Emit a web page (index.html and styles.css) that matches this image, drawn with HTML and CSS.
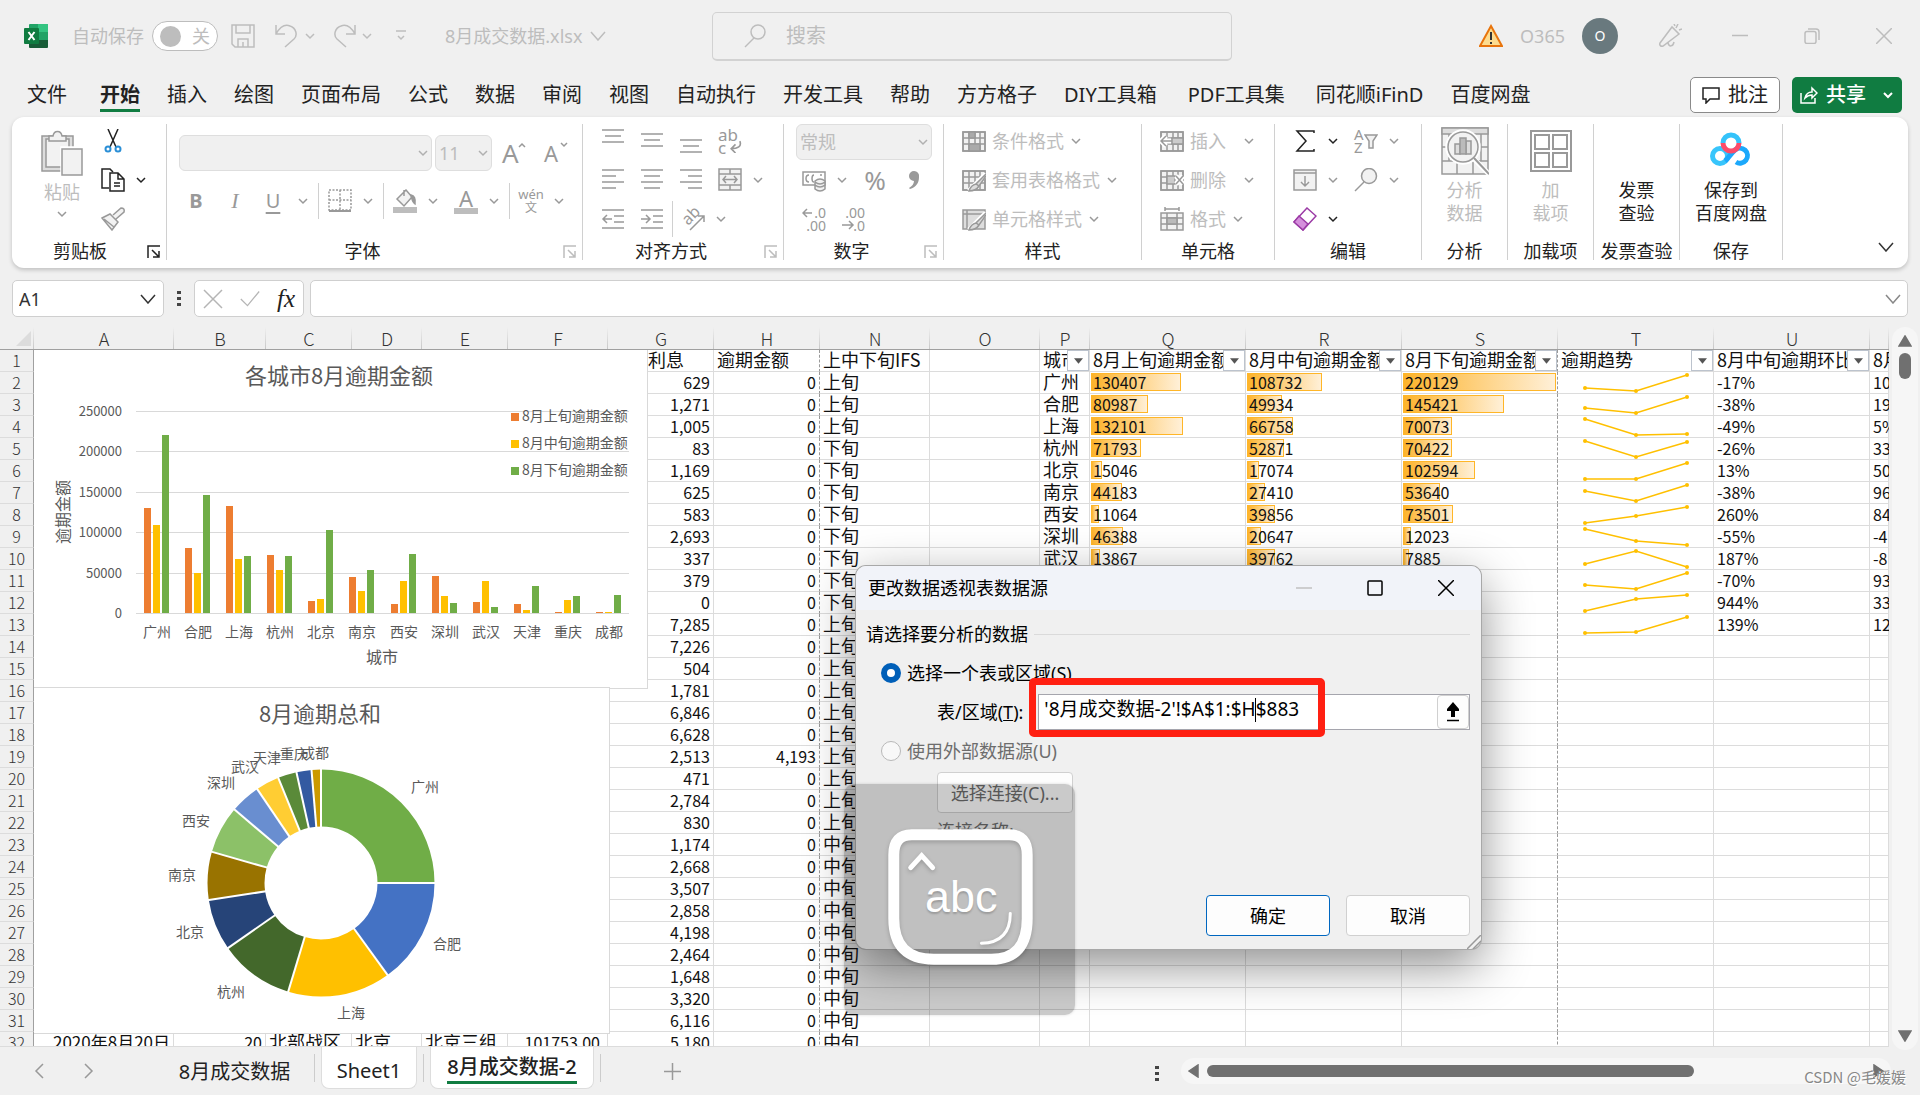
FILE: index.html
```
<!DOCTYPE html>
<html lang="zh-CN">
<head>
<meta charset="utf-8">
<title>8月成交数据.xlsx - Excel</title>
<link rel="stylesheet" href="styles.css">
</head>
<body>
<svg class="defs" aria-hidden="true">
  <symbol id="chev" viewBox="0 0 12 12"><path d="M2 4l4 4 4-4"/></symbol>
  <symbol id="launch" viewBox="0 0 14 14"><path d="M1 13V1h12M5 5l7 7M12 6v6H6"/></symbol>
  <symbol id="grid" viewBox="0 0 24 24"><path class="soft" d="M1 3h22v19H1z"/><path d="M1 3h22v19H1zM1 9h22M1 15h22M7 3v19M13 3v19M18 3v19"/></symbol>
</svg>

<header class="titlebar">
  <div class="title-left">
    <svg class="logo" viewBox="0 0 24 24"><path fill="#21a366" d="M6 0h17a1 1 0 0 1 1 1v7H5V1a1 1 0 0 1 1-1z"/><path fill="#33c481" d="M14 0h9a1 1 0 0 1 1 1v7H14z"/><path fill="#107c41" d="M5 8h10v8H5z"/><path fill="#21a366" d="M14 8h10v8H14z"/><path fill="#185c37" d="M5 16h19v7a1 1 0 0 1-1 1H6a1 1 0 0 1-1-1z"/><rect y="4" width="15" height="16" rx="1" fill="#107c41"/><path stroke="#fff" stroke-width="2" fill="none" d="M4.500 8l6 8M10.500 8l-6 8"/></svg>
    <span>自动保存</span>
    <button class="toggle" role="switch" aria-checked="false"><i></i>关</button>
    <button class="ic save" aria-label="保存"><svg viewBox="0 0 24 24"><path d="M1 1h22v22H4l-3-3zM5 1v8h14V1M7 23v-8h10v8M12 18v5"/></svg></button>
    <div class="split"><button class="ic" aria-label="撤消"><svg viewBox="0 0 24 24"><path d="M1 1v9h9M1 10C5 3 10 0 15 2c6 2 8 9 4 13l-9 8"/></svg></button><button class="cv" aria-label="撤消选项"><svg><use href="#chev"/></svg></button></div>
    <div class="split"><button class="ic" aria-label="恢复"><svg viewBox="0 0 24 24"><path d="M23 1v9h-9M23 10C19 3 14 0 9 2 3 4 1 11 5 15l9 8"/></svg></button><button class="cv" aria-label="恢复选项"><svg><use href="#chev"/></svg></button></div>
    <button class="cv qat" aria-label="自定义快速访问工具栏"><svg viewBox="0 0 12 12"><path d="M1 1h10M3 6l3 3 3-3"/></svg></button>
    <button class="filename">8月成交数据.xlsx<svg viewBox="0 0 16 10"><path d="M1 1l7 8 7-8"/></svg></button>
  </div>
  <label class="search"><svg viewBox="0 0 22 24"><circle cx="14" cy="8" r="7"/><path d="M10 14L1 23"/></svg><input type="search" placeholder="搜索" aria-label="搜索"></label>
  <div class="title-right">
    <svg class="warn" viewBox="0 0 24 24"><path fill="#fddc8f" stroke="#e8740c" stroke-width="2" d="M12 2l11 20H1z"/><path stroke="#333" stroke-width="2" d="M12 8v8M12 18v2"/></svg>
    <span class="user">O365</span><span class="avatar">O</span>
    <button class="ic mega" aria-label="即将推出"><svg viewBox="0 0 24 24"><path d="M2 19L14 3l7 7L5 22c-2 1-4-1-3-3zM10 19c1 4 5 4 6-1M18 4l2-4M21 6l3-1M17 2l-1-2"/></svg></button>
    <button class="win" aria-label="最小化"><svg viewBox="0 0 16 16"><path d="M0 7.500h16"/></svg></button>
    <button class="win" aria-label="还原"><svg viewBox="0 0 16 16"><rect x="1" y="3.500" width="11" height="12" rx="2"/><path d="M4 1h8q3 0 3 3v8"/></svg></button>
    <button class="win" aria-label="关闭"><svg viewBox="0 0 16 16"><path d="M0 0l16 16M16 0L0 16"/></svg></button>
  </div>
</header>

<nav class="tabs">
  <a class="file" href="#">文件</a><a class="on" href="#">开始</a><a href="#">插入</a><a href="#">绘图</a><a href="#">页面布局</a><a href="#">公式</a><a href="#">数据</a><a href="#">审阅</a><a href="#">视图</a><a href="#">自动执行</a><a href="#">开发工具</a><a href="#">帮助</a><a href="#">方方格子</a><a class="mixed" href="#">DIY工具箱</a><a class="mixed" href="#">PDF工具集</a><a href="#">同花顺iFinD</a><a href="#">百度网盘</a>
  <button class="comment"><svg viewBox="0 0 18 18"><path d="M1 2h16v11H8l-4 4v-4H1z"/></svg>批注</button>
  <button class="share"><svg viewBox="0 0 18 18"><path d="M1 7v10h14v-5M5 12c1-4 4-6 7-6V2l5 5-5 5V9c-3 0-5 1-7 3z"/></svg>共享<svg class="sc"><use href="#chev"/></svg></button>
</nav>

<section class="ribbon">
  <div class="group g-clip">
    <div class="tools">
      <button class="paste"><svg viewBox="0 0 42 46"><path class="soft2" d="M1 6h31v35H1z"/><path class="soft" d="M5 9h23v28H5z"/><path class="soft" d="M8 11V6h4c1-6 8-6 9 0h4v5z"/><path class="white" d="M20 17h22v28H20z"/><path class="soft" d="M21 19h20v26H21z"/></svg>粘贴<svg class="c"><use href="#chev"/></svg></button>
      <div class="rows">
        <button class="ic dark" aria-label="剪切"><svg viewBox="0 0 24 24"><path d="M7 0l8 18M17 0L9 18"/><g stroke="#2b8fd6" stroke-width="2"><circle cx="7" cy="20" r="2.500"/><circle cx="17" cy="20" r="2.500"/></g></svg></button>
        <div class="split dark"><button class="ic" aria-label="复制"><svg viewBox="0 0 24 24"><path d="M8 20H1V1h8l3 3"/><path d="M9 5h8l6 6v12H9zM17 5v6h6M13 15h6M13 18h6"/></svg></button><button class="cv" aria-label="复制选项"><svg><use href="#chev"/></svg></button></div>
        <button class="ic" aria-label="格式刷"><svg viewBox="0 0 24 24"><path class="soft" d="M1 11l8-4 8 8-6 8zM12 8l8-7q4 0 3 4l-8 7M3 12l10 8"/></svg></button>
      </div>
    </div>
    <div class="cap">剪贴板<button class="la dark" aria-label="剪贴板设置"><svg><use href="#launch"/></svg></button></div>
  </div>

  <div class="group g-font">
    <div class="tools">
      <div class="row combos">
        <select class="combo font-name" aria-label="字体" disabled><option></option></select>
        <select class="combo font-size" aria-label="字号" disabled><option>11</option></select>
        <button class="ic letter big" aria-label="增大字号">A<svg class="sup"><path d="M1 5l3-3 3 3"/></svg></button>
        <button class="ic letter" aria-label="减小字号">A<svg class="sup"><path d="M1 1l3 3 3-3"/></svg></button>
      </div>
      <div class="row fmt">
        <button class="tx b">B</button><button class="tx i">I</button>
        <div class="split"><button class="tx u">U</button><button class="cv" aria-label="下划线选项"><svg><use href="#chev"/></svg></button></div>
        <span class="sep"></span>
        <div class="split"><button class="ic" aria-label="边框"><svg viewBox="0 0 24 24"><path stroke-dasharray="2 1.500" d="M1 1h22v20H1zM12 1v20M1 11h22"/><path d="M1 22h22" stroke-width="2"/></svg></button><button class="cv" aria-label="边框选项"><svg><use href="#chev"/></svg></button></div>
        <span class="sep"></span>
        <div class="split"><button class="ic" aria-label="填充颜色"><svg viewBox="0 0 24 24"><path class="soft" d="M4 10l9-9 6 7-8 9zM11 1v6"/><path fill="#999" d="M18 6q5 1 4 9-3-2-4-9z"/><path stroke="#bdbdbd" stroke-width="6" d="M0 21h24"/></svg></button><button class="cv" aria-label="填充选项"><svg><use href="#chev"/></svg></button></div>
        <div class="split far"><button class="ic fc" aria-label="字体颜色">A</button><button class="cv" aria-label="字体颜色选项"><svg><use href="#chev"/></svg></button></div>
        <span class="sep"></span>
        <div class="split"><button class="ic wen"><span>wén</span><span>文</span></button><button class="cv" aria-label="拼音选项"><svg><use href="#chev"/></svg></button></div>
      </div>
    </div>
    <div class="cap">字体<button class="la" aria-label="字体设置"><svg><use href="#launch"/></svg></button></div>
  </div>

  <div class="group g-align">
    <div class="tools"><div class="rows">
      <div class="row">
        <button class="ic" aria-label="顶端对齐"><svg viewBox="0 0 24 24"><path d="M1 1h22M4 7h16M1 13h22"/></svg></button>
        <button class="ic" aria-label="垂直居中"><svg viewBox="0 0 24 24"><path d="M1 5h22M4 11h16M1 17h22"/></svg></button>
        <button class="ic" aria-label="底端对齐"><svg viewBox="0 0 24 24"><path d="M1 11h22M4 17h16M1 23h22"/></svg></button>
        <button class="ic wrap"><span>ab</span><span>c</span><svg viewBox="0 0 12 12"><path d="M10 1c2 5-2 7-8 7M6 4L2 8l4 4"/></svg></button>
      </div>
      <div class="row">
        <button class="ic" aria-label="左对齐"><svg viewBox="0 0 24 24"><path d="M1 2h22M1 8h14M1 14h22M1 20h14"/></svg></button>
        <button class="ic" aria-label="居中"><svg viewBox="0 0 24 24"><path d="M1 2h22M4 8h16M1 14h22M4 20h16"/></svg></button>
        <button class="ic" aria-label="右对齐"><svg viewBox="0 0 24 24"><path d="M1 2h22M9 8h14M1 14h22M9 20h14"/></svg></button>
        <div class="split"><button class="ic" aria-label="合并后居中"><svg viewBox="0 0 24 24"><path class="soft" d="M1 1h22v21H1z"/><path d="M1 6h22M1 17h22M12 1v5M12 17v5M5 11.500h14M8 8l-3 3.500L8 15M16 8l3 3.500-3 3.500"/></svg></button><button class="cv" aria-label="合并选项"><svg><use href="#chev"/></svg></button></div>
      </div>
      <div class="row">
        <button class="ic" aria-label="减少缩进"><svg viewBox="0 0 24 24"><path d="M1 3h22M13 9h10M13 15h10M1 21h22M2 12h9M6 8l-4 4 4 4"/></svg></button>
        <div class="row tight"><button class="ic" aria-label="增加缩进"><svg viewBox="0 0 24 24"><path d="M1 3h22M13 9h10M13 15h10M1 21h22M1 12h9M6 8l4 4-4 4"/></svg></button>
        <span class="sep"></span>
        <div class="split"><button class="ic slant"><span>ab</span><svg viewBox="0 0 24 24"><path d="M9 23L23 9M17 9h6v6"/></svg></button><button class="cv" aria-label="方向选项"><svg><use href="#chev"/></svg></button></div></div>
      </div>
    </div></div>
    <div class="cap">对齐方式<button class="la" aria-label="对齐设置"><svg><use href="#launch"/></svg></button></div>
  </div>

  <div class="group g-num">
    <div class="tools"><div class="rows">
      <select class="combo num" aria-label="数字格式" disabled><option>常规</option></select>
      <div class="row in">
        <div class="split"><button class="ic" aria-label="会计数字格式"><svg viewBox="0 0 24 24"><path d="M1 4h22v13H1zM7 7q-3 0-3 3.500T7 14M12 7q-2 0-2 3.500T12 14M18 7h2"/><path class="soft" d="M13 13v8q5 4 10 0v-8q-5-4-10 0zM13 14q5 4 10 0M13 17q5 4 10 0"/></svg></button><button class="cv" aria-label="货币选项"><svg><use href="#chev"/></svg></button></div>
        <button class="ic pct">%</button>
        <button class="ic" aria-label="千位分隔"><svg viewBox="0 0 24 24"><path fill="#999" stroke="none" d="M12 3a5 5 0 0 1 5 6c0 6-3 10-9 12l-1-1c3-2 5-4 5-7A5 5 0 0 1 12 3z"/></svg></button>
      </div>
      <div class="row in">
        <button class="ic dec"><span>.0</span><span>.00</span><svg viewBox="0 0 24 24"><path d="M1 6h9M5 2L1 6l4 4"/></svg></button>
        <button class="ic dec"><span>.00</span><span>.0</span><svg viewBox="0 0 24 24"><path d="M1 18h11M8 14l4 4-4 4"/></svg></button>
      </div>
    </div></div>
    <div class="cap">数字<button class="la" aria-label="数字设置"><svg><use href="#launch"/></svg></button></div>
  </div>

  <div class="group g-style">
    <div class="tools"><div class="rows">
      <button class="lb"><svg viewBox="0 0 24 24"><use href="#grid"/><path fill="#aaa" d="M7 3h6v6H7zM7 15h11v7H7z"/></svg>条件格式<svg class="c"><use href="#chev"/></svg></button>
      <button class="lb"><svg viewBox="0 0 24 24"><use href="#grid"/><path class="halo" d="M24 6L13 17l-6 6"/><path class="soft2" d="M24 6L14 16l3 2 7-10M14 16q-5 1-7 7 7 0 10-5z"/></svg>套用表格格式<svg class="c"><use href="#chev"/></svg></button>
      <button class="lb"><svg viewBox="0 0 24 24"><path class="soft2" d="M1 3h22v19H1zM5 3v19M1 7h22"/><path class="halo" d="M24 6L13 17l-6 6"/><path class="soft2" d="M24 6L14 16l3 2 7-10M14 16q-5 1-7 7 7 0 10-5z"/></svg>单元格样式<svg class="c"><use href="#chev"/></svg></button>
    </div></div>
    <div class="cap">样式</div>
  </div>

  <div class="group g-cell">
    <div class="tools"><div class="rows">
      <button class="lb"><svg viewBox="0 0 24 24"><use href="#grid"/><path fill="#ccc" d="M12 9h11v6H12z"/><path class="halo" d="M0 12h11M6 7l-5 5 5 5"/><path d="M1 12h11M6 7l-5 5 5 5"/></svg><span>插入</span><svg class="c"><use href="#chev"/></svg></button>
      <button class="lb"><svg viewBox="0 0 24 24"><use href="#grid"/><path fill="#ccc" d="M7 8h8v8H7z"/><path class="halo" d="M16 8l7 8M23 8l-7 8"/><path d="M16 8l7 8M23 8l-7 8"/></svg><span>删除</span><svg class="c"><use href="#chev"/></svg></button>
      <button class="lb"><svg viewBox="0 0 24 24"><path class="soft" d="M1 6h22v17H1z"/><path d="M1 11h22M1 17h22M7 6v17M17 6v17M5 2h14M5 0v4M19 0v4"/><path fill="#bbb" d="M7 11h10v6H7z"/></svg>格式<svg class="c"><use href="#chev"/></svg></button>
    </div></div>
    <div class="cap">单元格</div>
  </div>

  <div class="group g-edit">
    <div class="tools"><div class="rows">
      <div class="row">
        <div class="split dark"><button class="ic" aria-label="自动求和"><svg viewBox="0 0 24 24"><path d="M21 4V2H4l9 10-9 10h17v-2"/></svg></button><button class="cv" aria-label="求和选项"><svg><use href="#chev"/></svg></button></div>
        <div class="split"><button class="ic az"><span>A</span><span>Z</span><svg viewBox="0 0 14 16"><path class="soft" d="M1 1h12L9 7v7H5V7z"/></svg></button><button class="cv" aria-label="排序选项"><svg><use href="#chev"/></svg></button></div>
      </div>
      <div class="row">
        <div class="split"><button class="ic" aria-label="填充"><svg viewBox="0 0 24 24"><path class="soft" d="M1 2h22v20H1zM1 5h22M12 8v10M8 14l4 4 4-4"/></svg></button><button class="cv" aria-label="填充选项"><svg><use href="#chev"/></svg></button></div>
        <div class="split"><button class="ic" aria-label="查找和选择"><svg viewBox="0 0 24 24"><circle class="soft" cx="15" cy="8" r="7.500"/><path d="M10 14L1 23"/></svg></button><button class="cv" aria-label="查找选项"><svg><use href="#chev"/></svg></button></div>
      </div>
      <div class="split dark"><button class="ic" aria-label="清除"><svg viewBox="0 0 24 24" class="purple"><path fill="#fff" d="M14 1l9 8L10 23l-9-8z"/><path fill="#d58fdc" d="M6 9l9 8-5 6-9-8z"/></svg></button><button class="cv" aria-label="清除选项"><svg><use href="#chev"/></svg></button></div>
    </div></div>
    <div class="cap">编辑</div>
  </div>

  <div class="group g-big">
    <button class="bigbtn"><svg viewBox="0 0 48 48"><path class="soft" d="M1 1h46v46H1z"/><path class="soft2" d="M1 1h46v6H1z"/><path d="M1 20h46M1 34h46M16 34v13M32 34v13M8 7v27M40 7v27"/><circle class="white" cx="22" cy="20" r="17"/><path class="halo" d="M33 32l15 15"/><circle class="soft" cx="22" cy="20" r="15"/><path class="soft2" d="M14 17h5v10h-5zM25 14h5v13h-5z"/><path fill="#bbb" d="M19 11h6v16h-6z"/><path stroke-width="2" d="M33 31l15 16"/></svg><span>分析<br>数据</span></button>
    <div class="cap">分析</div>
  </div>
  <div class="group g-big">
    <button class="bigbtn"><svg viewBox="0 0 48 48"><path stroke-width="2" d="M4 4h40v40H4zM8 8h14v14H8zM26 8h14v14H26zM8 26h14v14H8zM26 26h14v14H26z"/></svg><span>加<br>载项</span></button>
    <div class="cap">加载项</div>
  </div>
  <div class="group g-big">
    <button class="bigbtn dark"><svg viewBox="0 0 48 48"></svg><span>发票<br>查验</span></button>
    <div class="cap">发票查验</div>
  </div>
  <div class="group g-save">
    <button class="bigbtn dark"><svg viewBox="0 0 48 48" class="pan"><path stroke="#35c3fa" d="M16 16a8 8 0 0 1 16 0"/><circle cx="13" cy="29" r="7.500" stroke="#38c5fb"/><path stroke="#1ba8fb" d="M18 34c4-3 6-8 10-11a7.500 7.500 0 1 1 1 12"/><path stroke="#fb4c6a" d="M16 16a8 8 0 0 0 16 0"/></svg><span>保存到<br>百度网盘</span></button>
    <div class="cap">保存</div>
  </div>
  <button class="fold" aria-label="折叠功能区"><svg viewBox="0 0 16 10"><path d="M1 1l7 8 7-8"/></svg></button>
</section>

<section class="formula">
  <div class="box namebox"><input value="A1" aria-label="名称框"><svg viewBox="0 0 16 10"><path d="M1 1l7 8 7-8"/></svg></div>
  <svg class="dots" viewBox="0 0 4 16"><path d="M0 0h4v3H0zM0 6h4v3H0zM0 12h4v3H0z"/></svg>
  <div class="box fxbox"><button aria-label="取消"><svg viewBox="0 0 20 20"><path d="M1 1l18 18M19 1L1 19"/></svg></button><button aria-label="输入"><svg viewBox="0 0 24 20"><path d="M1 10l8 8L23 1"/></svg></button><button class="fx">fx</button></div>
  <div class="box fbar"><input aria-label="编辑栏"><svg viewBox="0 0 16 10"><path d="M1 1l7 8 7-8"/></svg></div>
</section>

<main class="sheet">
  <div class="cells">
    <table id="grid-table"></table>
    <svg class="chart chart-bar" id="chart-bar" viewBox="0 0 613 338"></svg>
    <svg class="chart chart-ring" id="chart-ring" viewBox="0 0 575 345"></svg>
  </div>
  <div class="vscroll"><svg viewBox="0 0 14 12"><path d="M7 1l6 10H1z"/></svg><i></i><svg class="down" viewBox="0 0 14 12"><path d="M7 11L1 1h12z"/></svg></div>
</main>

<footer class="bottom">
  <button class="nav" aria-label="上一个"><svg viewBox="0 0 10 16"><path d="M9 1L2 8l7 7"/></svg></button>
  <button class="nav" aria-label="下一个"><svg viewBox="0 0 10 16"><path d="M1 1l7 7-7 7"/></svg></button>
  <div class="sheets">
    <button class="st first">8月成交数据</button><i></i><button class="st open">Sheet1</button><i></i><button class="st open cur"><span>8月成交数据-2</span></button><i></i>
  </div>
  <button class="plus" aria-label="新工作表"><svg viewBox="0 0 17 17"><path d="M8.500 0v17M0 8.500h17"/></svg></button>
  <svg class="dots hd" viewBox="0 0 4 16"><path d="M0 0h4v3H0zM0 6h4v3H0zM0 12h4v3H0z"/></svg>
  <div class="hscroll"><svg viewBox="0 0 11 14"><path d="M1 7l9-6v12z"/></svg><i></i><svg class="right" viewBox="0 0 11 14"><path d="M10 7L1 1v12z"/></svg></div>
</footer>

<form class="dialog" role="dialog" aria-labelledby="dlg-title">
  <div class="dlg-head"><h1 id="dlg-title">更改数据透视表数据源</h1>
    <button type="button" disabled aria-label="最小化"><svg viewBox="0 0 16 16"><path d="M0 8h16"/></svg></button>
    <button type="button" aria-label="最大化"><svg viewBox="0 0 16 16"><rect x="1" y="1" width="14" height="14" rx="1"/></svg></button>
    <button type="button" aria-label="关闭"><svg viewBox="0 0 16 16"><path d="M0 0l16 16M16 0L0 16"/></svg></button>
  </div>
  <div class="dlg-body">
    <div class="legend">请选择要分析的数据</div>
    <label class="opt"><input type="radio" name="src" checked>选择一个表或区域(S)</label>
    <div class="field"><label for="range">表/区域(<u>T</u>):</label><div class="range"><input id="range" value="'8月成交数据-2'!$A$1:$H$883"><i class="caret"></i><button type="button" aria-label="折叠对话框"><svg viewBox="0 0 16 20"><path fill="#000" stroke="none" d="M8 0l6 7v2h-4v6H6V9H2V7z"/><path d="M2 18.500h12"/></svg></button></div></div>
    <label class="opt off"><input type="radio" name="src" disabled>使用外部数据源(U)</label>
    <button type="button" class="btn conn" disabled>选择连接(C)...</button>
    <div class="conn-name">连接名称:</div>
    <div class="actions"><button type="button" class="btn ok">确定</button><button type="button" class="btn">取消</button></div>
  </div>
  <svg class="grip" viewBox="0 0 14 14"><path d="M0 14L14 0M6 14l8-8"/></svg>
</form>
<div class="mark"></div>
<div class="ime"><svg viewBox="0 0 232 232"><path stroke="#fff" stroke-width="11" d="M68 51h98q18 0 18 20v64q0 41-36 41H90q-40 0-40-41V71q0-20 18-20z"/><path stroke="#fff" stroke-width="5" stroke-linecap="round" d="M67 84l11-12 11 12"/><path stroke="#fff" stroke-width="3" stroke-linecap="round" d="M167 130q0 29-29 30"/></svg><span>abc</span></div>
<div class="watermark">CSDN @毛媛媛</div>
<script src="app.js"></script>
</body>
</html>
```
FILE: app.js
```
const cities = [
  ['广州', 130407, 108732, 220129, '-17%', '10', '#70ad47', 391, 99],
  ['合肥', 80987, 49934, 145421, '-38%', '19', '#4472c4', 413, 256],
  ['上海', 132101, 66758, 70073, '-49%', '5%', '#ffc000', 317, 325],
  ['杭州', 71793, 52871, 70422, '-26%', '33', '#43682b', 197, 304],
  ['北京', 15046, 17074, 102594, '13%', '50', '#264478', 156, 244],
  ['南京', 44183, 27410, 53640, '-38%', '96', '#997300', 148, 187],
  ['西安', 11064, 39856, 73501, '260%', '84', '#8cc168', 162, 133],
  ['深圳', 46388, 20647, 12023, '-55%', '-4', '#698ed0', 187, 95],
  ['武汉', 13867, 39762, 7885, '187%', '-8', '#ffcd33', 211, 79],
  ['天津', 11500, 4100, 33600, '-70%', '93', '#5a8a39', 233, 70],
  ['重庆', 1560, 16400, 21300, '944%', '33', '#335aa1', 260, 66],
  ['成都', 600, 1434, 22500, '139%', '12', '#cc9a00', 281, 65]
];
const interest = ['629', '1,271', '1,005', '83', '1,169', '625', '583', '2,693', '337', '379', '0', '7,285', '7,226', '504', '1,781', '6,846', '6,628', '2,513', '471', '2,784', '830', '1,174', '2,668', '3,507', '2,858', '4,198', '2,464', '1,648', '3,320', '6,116', '5,180'];
const columns = [['A', 140], ['B', 92], ['C', 86], ['D', 70], ['E', 86], ['F', 100], ['G', 106], ['H', 106], ['N', 110], ['O', 110], ['P', 50], ['Q', 156], ['R', 156], ['S', 156], ['T', 156], ['U', 156], ['', 0]];
const maxValue = 220129;
const openRows = 9; // cities whose figures are not behind the dialog

const filter = '<button class="filter" aria-label="筛选"><svg viewBox="0 0 10 6"><path d="M0 0h10L5 6z"/></svg></button>';
const bar = v => `<td><div class="bar" style="width:${Math.round(v / maxValue * 100)}%">${v}</div></td>`;

function spark(values) {
  const lo = Math.min(...values), hi = Math.max(...values);
  const pts = values.map((v, i) => [27 + i * 51, Math.round(19 - 16 * (v - lo) / (hi - lo))]);
  return `<td><svg class="spark" viewBox="0 0 155 21"><polyline points="${pts.join(' ')}"/>${pts.map(p => `<circle cx="${p[0]}" cy="${p[1]}" r="2"/>`).join('')}</svg></td>`;
}

function period(row) {
  if (row <= 4) return '上旬';
  if (row <= 12) return '下旬';
  return row <= 22 ? '上旬' : '中旬';
}

function buildGrid() {
  let html = '<colgroup><col style="width:34px">';
  html += columns.map(c => c[1] ? `<col style="width:${c[1]}px">` : '<col>').join('');
  html += '</colgroup><thead><tr><th class="corner"><i></i></th>' + columns.map(c => `<th>${c[0]}</th>`).join('') + '</tr></thead><tbody>';
  html += '<tr><th>1</th>' + '<td></td>'.repeat(6) + '<td class="cut">利息</td><td class="brk">逾期金额</td><td>上中下旬IFS</td><td></td>';
  html += ['城市', '8月上旬逾期金额', '8月中旬逾期金额', '8月下旬逾期金额', '逾期趋势', '8月中旬逾期环比'].map((t, i) => `<td class="${i === 3 ? 'has-filter brk' : 'has-filter'}">${t}${filter}</td>`).join('') + '<td>8月</td></tr>';
  for (let r = 2; r <= 32; r++) {
    const c = cities[r - 2];
    html += `<tr><th>${r}</th>`;
    html += r === 32
      ? '<td class="n date">2020年8月20日</td><td class="n">20</td><td>北部战区</td><td>北京</td><td>北京三组</td><td class="n money">101753.00</td>'
      : '<td></td>'.repeat(6);
    html += `<td class="n">${interest[r - 2]}</td><td class="n brk">${r === 19 ? '4,193' : '0'}</td><td>${period(r)}</td><td></td>`;
    if (c) {
      html += r - 2 < openRows
        ? `<td>${c[0]}</td>${bar(c[1])}${bar(c[2])}${bar(c[3]).replace('<td>', '<td class="brk">')}`
        : '<td></td><td></td><td></td><td class="brk"></td>';
      html += spark(c.slice(1, 4)) + `<td class="l">${c[4]}</td><td class="l">${c[5]}</td>`;
    } else {
      html += '<td></td><td></td><td></td><td class="brk"></td><td></td><td></td><td></td>';
    }
    html += '</tr>';
  }
  document.getElementById('grid-table').innerHTML = html + '</tbody>';
}

function buildBars() {
  const base = 263, unit = 202 / 250000, pitch = 493 / 12;
  let s = '<text class="t" x="305" y="34">各城市8月逾期金额</text>';
  for (let v = 0; v <= 250000; v += 50000) {
    const y = Math.round(base - v * unit);
    s += `<path class="rule" d="M102 ${y + 0.5}H595"/><text class="num" x="88" y="${y + 5}">${v}</text>`;
  }
  cities.forEach((c, i) => {
    const x = Math.round(110 + i * pitch);
    ['#ed7d31', '#ffc000', '#70ad47'].forEach((col, k) => {
      const h = Math.max(1, Math.round(c[k + 1] * unit));
      s += `<rect x="${x + k * 9}" y="${base - h}" width="7" height="${h}" fill="${col}"/>`;
    });
    s += `<text class="m" x="${x + 13}" y="287">${c[0]}</text>`;
  });
  [['上', '#ed7d31'], ['中', '#ffc000'], ['下', '#70ad47']].forEach((l, i) => {
    s += `<rect x="477" y="${63 + i * 27}" width="8" height="8" fill="${l[1]}"/><text class="k" x="488" y="${71 + i * 27}">8月${l[0]}旬逾期金额</text>`;
  });
  s += '<text class="m ax" x="348" y="313">城市</text><text class="m ax" transform="translate(35 162) rotate(-90)">逾期金额</text>';
  document.getElementById('chart-bar').innerHTML = s;
}

function buildRing() {
  const sums = cities.map(c => c[1] + c[2] + c[3]);
  const total = sums.reduce((a, b) => a + b);
  let s = '<text class="t" x="286" y="34">8月逾期总和</text><g transform="translate(287 195) rotate(-90)">', rules = '', at = 0;
  cities.forEach((c, i) => {
    const len = sums[i] / total * 360;
    s += `<circle r="85" pathLength="360" stroke="${c[6]}" stroke-dasharray="${len} ${360 - len}" stroke-dashoffset="${-at}"/>`;
    rules += `<path class="gap" d="M54 0H115" transform="rotate(${at})"/>`;
    at += len;
  });
  s += rules + '</g>' + cities.map(c => `<text class="m" x="${c[7]}" y="${c[8] + 5}">${c[0]}</text>`).join('');
  document.getElementById('chart-ring').innerHTML = s;
}

buildGrid();
buildBars();
buildRing();
```
FILE: styles.css
```
* { box-sizing: border-box; }
body { margin: 0; height: 100vh; display: flex; flex-direction: column; overflow: hidden; position: relative; background: #f0f0f0; color: #222; font: 18px/24px "Noto Sans", "Noto Sans CJK SC", sans-serif; }
button, input, select { font: inherit; color: inherit; background: none; border: 0; padding: 0; margin: 0; }
button { display: inline-flex; align-items: center; justify-content: center; flex: none; white-space: nowrap; }
input { min-width: 0; outline: 0; }
svg { fill: none; stroke: currentColor; stroke-width: 1.5; flex: none; display: block; }
.defs { position: absolute; width: 0; height: 0; }
.soft { fill: #f2f2f2; }
.soft2 { fill: #ddd; }
.white { fill: #fff; stroke: #fff; }
.halo { stroke: #fff; stroke-width: 5; }

/* title bar */
.titlebar { display: flex; align-items: center; height: 72px; flex: none; color: #bdbdbd; }
.title-left { flex: 1 1 0; display: flex; align-items: center; padding: 0 0 0 24px; white-space: nowrap; }
.logo { width: 24px; height: 24px; stroke: none; margin-right: 24px; }
.toggle { width: 66px; height: 30px; border: 1px solid #bdbdbd; border-radius: 15px; background: #fff; margin: 0 13px 0 8px; gap: 11px; }
.toggle i { width: 21px; height: 21px; border-radius: 50%; background: #bdbdbd; }
.ic { width: 24px; height: 24px; position: relative; }
.ic > svg { width: 24px; height: 24px; }
.save { margin-right: 20px; }
.cv, .cv svg { width: 12px; height: 12px; }
.split { display: flex; align-items: center; gap: 10px; }
.title-left .split { gap: 5px; margin-right: 16px; }
.qat { margin: 0 38px 0 6px; }
.filename { gap: 8px; }
.filename svg, .fold svg, .box svg { width: 16px; height: 10px; }
.search { flex: 0 1 520px; height: 49px; display: flex; align-items: center; gap: 20px; padding-left: 31px; border: 1px solid #d2d2d2; border-bottom-width: 2px; border-radius: 5px; font-size: 20px; }
.search svg { width: 22px; height: 24px; }
.search input { flex: 1; }
.search input::placeholder { color: #bdbdbd; opacity: 1; }
.title-right { flex: 1 1 0; display: flex; align-items: center; justify-content: flex-end; }
.warn { width: 24px; height: 24px; margin-right: 17px; }
.avatar { width: 36px; height: 36px; border-radius: 50%; background: #69797e; color: #fff; font-size: 14px; line-height: 36px; text-align: center; margin: 0 40px 0 17px; }
.mega { margin-right: 22px; }
.win { width: 72px; }
.win svg { width: 16px; height: 16px; }

/* ribbon tabs */
.tabs { display: flex; align-items: center; height: 45px; flex: none; padding: 0 18px 0 27px; gap: 27px; font-size: 20px; line-height: 36px; white-space: nowrap; }
.tabs a { color: inherit; text-decoration: none; }
.tabs .file { margin-right: 6px; }
.tabs .mixed { padding-right: 4px; }
.tabs .on { font-weight: 700; box-shadow: 0 3px 0 #107c41; line-height: 29px; }
.comment, .share { height: 36px; border-radius: 5px; gap: 8px; }
.comment { width: 90px; border: 1px solid #8a8a8a; background: #fff; margin-left: auto; }
.share { width: 110px; background: #107c41; color: #fff; margin-left: -15px; font-weight: 500; }
.tabs svg { width: 18px; height: 18px; }
.tabs .sc { width: 12px; height: 12px; margin-left: 8px; stroke-width: 2; }

/* ribbon */
.ribbon { display: flex; flex: none; height: 151px; margin: 0 12px; padding: 7px 0 8px; background: #fff; border-radius: 12px; box-shadow: 0 2px 4px rgba(0,0,0,.2); color: #999; }
.group { flex: none; display: flex; flex-direction: column; border-right: 1px solid #d0d0d0; }
.tools { flex: 1; }
.cap { height: 17px; line-height: 17px; display: flex; align-items: center; justify-content: center; color: #222; white-space: nowrap; }
.la { width: 24px; height: 14px; color: #bdbdbd; }
.cap:has(.la) { display: grid; grid-template-columns: 1fr auto 1fr 24px; }
.cap:has(.la)::before { content: ""; }
.cap .la { grid-column: 4; }
.g-clip .cap { grid-template-columns: 41px auto 1fr 24px; }
.la svg { width: 14px; height: 14px; }
.dark { color: #222; }
.rows { display: flex; flex-direction: column; gap: 15px; padding-top: 5px; align-items: flex-start; }
.row { display: flex; align-items: center; gap: 15px; }
.tight { gap: 8px; height: 24px; }
.sep { width: 1px; height: 36px; background: #d0d0d0; flex: none; }
.g-clip { width: 155px; }
.g-clip .tools { display: flex; padding-left: 25px; gap: 14px; }
.paste { flex-direction: column; width: 50px; height: 92px; margin-top: 5px; color: #bdbdbd; line-height: 32px; }
.paste svg { width: 42px; height: 46px; color: #999; }
.paste .c, .lb .c { width: 12px; height: 12px; }
.g-font { width: 416px; }
.g-font .tools { padding: 11px 0 0 12px; }
.combo { appearance: none; height: 36px; border: 1px solid #dedede; border-radius: 6px; background: #f0f0f0 url("data:image/svg+xml,%3Csvg xmlns='http://www.w3.org/2000/svg' width='12' height='12'%3E%3Cpath d='M2 4l4 4 4-4' fill='none' stroke='%23b0b0b0' stroke-width='1.500'/%3E%3C/svg%3E") no-repeat right 2px center; color: #bdbdbd; opacity: 1; padding-left: 3px; }
.font-name { width: 253px; }
.font-size { width: 57px; }
.combos { gap: 3px; margin-bottom: 18px; }
.letter { margin-left: 7px; font-size: 22px; justify-content: flex-start; }
.letter + .letter { margin-left: 15px; }
.letter.big { font-size: 26px; }
.ic .sup { position: absolute; right: 0; top: 1px; width: 8px; height: 6px; }
.fmt { gap: 9px; height: 24px; padding-left: 2px; }
.tx { width: 30px; font-size: 20px; }
.tx.u { width: 28px; text-decoration: underline; text-underline-offset: 4px; }
.b { font-weight: 700; }
.i { font-family: "Liberation Serif", serif; font-style: italic; font-size: 22px; }
.far { margin-left: 6px; }
.fc { font-size: 22px; line-height: 22px; border-bottom: 6px solid #bdbdbd; height: 26px; }
.wen { flex-direction: column; font-size: 13px; line-height: 14px; }
.wen span + span { font-size: 12px; }
.g-align { width: 201px; }
.g-align .tools { padding-left: 18px; }
.wrap { font-size: 17px; line-height: 13px; flex-direction: column; align-items: flex-start; }
.wrap > svg { position: absolute; right: 0; bottom: 0; width: 13px; height: 13px; }
.slant span { font-size: 16px; line-height: 16px; transform: rotate(-45deg); }
.slant { align-items: flex-start; justify-content: flex-start; }
.slant > svg { position: absolute; left: 0; top: 0; }
.g-num { width: 160px; }
.g-num .tools { padding-left: 12px; }
.g-num .rows { padding-top: 0; }
.num { width: 136px; margin-bottom: -7px; }
.in { padding-left: 6px; }
.pct { font-size: 26px; }
.dec { flex-direction: column; align-items: flex-end; font-size: 14px; line-height: 13px; }
.dec > svg { position: absolute; left: 0; top: 0; }
.g-style { width: 198px; }
.g-style .tools, .g-cell .tools, .g-edit .tools { padding-left: 18px; }
.lb { height: 24px; gap: 6px; color: #bdbdbd; }
.lb svg { width: 24px; height: 24px; color: #999; }
.lb span { width: 47px; text-align: left; }
.g-cell { width: 133px; }
.g-edit { width: 147px; }
.az { flex-direction: column; align-items: flex-start; font-size: 15px; line-height: 13px; }
.az > svg { position: absolute; right: 0; top: 5px; width: 14px; height: 16px; }
.purple { stroke: #9b3aa5; }
.g-big { width: 86px; }
.g-save { width: 103px; }
.bigbtn { flex: 1; flex-direction: column; justify-content: flex-start; padding-top: 3px; gap: 4px; line-height: 23px; color: #bdbdbd; }
.bigbtn svg { width: 48px; height: 48px; color: #999; }
.bigbtn.dark { color: #222; }
.bigbtn .pan { stroke-width: 5; }
.fold { margin: auto 11px 8px auto; width: 22px; color: #333; }

/* formula bar */
.formula { display: flex; align-items: center; margin: 12px 12px 10px; height: 37px; flex: none; }
.box { height: 37px; background: #fff; border: 1px solid #cfcfcf; border-radius: 5px; display: flex; align-items: center; }
.namebox { width: 152px; padding: 0 7px 0 6px; color: #333; }
.namebox input { flex: 1; }
.dots { width: 4px; height: 16px; fill: #444; stroke: none; margin: 0 13px; }
.fxbox { width: 110px; padding: 0 8px 0 8px; justify-content: space-between; margin-right: 6px; color: #b5b5b5; }
.fxbox svg { width: 20px; height: 20px; }
.fx { font: italic 25px/30px "Liberation Serif", serif; color: #222; }
.fbar { flex: 1; padding: 0 6px; color: #888; }
.fbar input { flex: 1; }

/* worksheet */
.sheet { flex: 1; min-height: 0; display: flex; }
.cells { flex: 1; min-width: 0; position: relative; overflow: hidden; border-bottom: 1px solid #dcdcdc; color: #111; font-family: "Noto Sans CJK SC", sans-serif; }
table { table-layout: fixed; width: 100%; border-spacing: 0; line-height: 19px; }
th, td { padding: 0; height: 22px; white-space: nowrap; }
td { background: #fff; border-right: 1px solid #dcdcdc; border-bottom: 1px solid #dcdcdc; padding: 0 3px; vertical-align: top; }
th { font-weight: 300; color: #333; border-bottom: 1px solid #dcdcdc; }
thead th { height: 23px; border-bottom-color: #a0a0a0; background: linear-gradient(#f0f0f0, #c8c8c8) no-repeat right / 1px 100%; }
tbody th { font-size: 16px; border-right: 1px solid #a0a0a0; }
.corner i { display: block; width: 0; margin: 0 3px 0 auto; border-left: 15px solid transparent; border-bottom: 15px solid #dcdcdc; }
.n, .l { font-size: 16px; line-height: 20px; }
.n { text-align: right; }
.date { font-size: 17px; }
.money { padding-right: 7px; }
.cut { padding-left: 40px; }
.brk { border-right: 1px dashed #999; }
td:has(.bar) { padding: 1px 1px 0; }
.bar { height: 18px; padding-left: 1px; line-height: 16px; font-size: 16px; border: 1px solid #ffb628; background: linear-gradient(90deg, #fdb32b, #fff0d8); }
.has-filter { position: relative; }
.filter { position: absolute; right: 0; top: 0; width: 22px; height: 21px; background: #fff; border: 1px solid #bcc3cd; }
.filter svg { width: 9px; height: 6px; fill: #555; stroke: none; }
td:has(.spark) { padding: 0; }
.spark { width: 155px; height: 21px; stroke: #ffc000; }
.spark circle { fill: #ffc000; stroke: none; }
.chart { position: absolute; left: 34px; background: #fff; border: 1px solid #d9d9d9; border-width: 0 1px 1px 0; stroke: none; fill: #595959; font-size: 14px; }
.chart-bar { top: 23px; width: 614px; height: 339px; }
.chart-ring { top: 360px; width: 576px; height: 347px; border-top-width: 1px; }
.chart text { text-anchor: middle; }
.chart .t { font-size: 22px; }
.chart .num { font-size: 13px; text-anchor: end; }
.chart .k { text-anchor: start; }
.chart .ax { font-size: 16px; }
.chart .rule { stroke: #d9d9d9; stroke-width: 1; }
.chart circle { fill: none; stroke-width: 57; }
.chart .gap { stroke: #fff; stroke-width: 2; }
.vscroll { width: 26px; margin: 0 2px -3px 3px; padding: 8px 6px 8px; background: #f6f6f6; border-radius: 13px; display: flex; flex-direction: column; align-items: center; position: relative; }
.vscroll svg, .hscroll svg { fill: #707070; stroke: #707070; }
.vscroll svg { width: 14px; height: 12px; }
.vscroll i { width: 12px; height: 26px; border-radius: 6px; background: #707070; margin-top: 6px; }
.vscroll .down { margin-top: auto; }

/* sheet tabs */
.bottom { display: flex; align-items: center; height: 48px; flex: none; padding: 0 29px 0 27px; font-size: 20px; }
.nav { width: 24px; height: 24px; margin-right: 26px; color: #999; }
.nav svg { width: 10px; height: 16px; }
.sheets { display: flex; gap: 6px; align-self: flex-start; margin-left: 34px; align-items: center; }
.sheets i { width: 1px; height: 28px; background: #ccc; }
.st { height: 42px; padding-top: 6px; }
.first { width: 147px; padding-top: 8px; }
.open { width: 96px; background: #fff; border: 1px solid #ddd; border-top: 0; border-radius: 0 0 8px 8px; }
.cur { width: 164px; padding-top: 4px; font-weight: 500; }
.cur span { border-bottom: 3px solid #107c41; padding-bottom: 2px; }
.plus { width: 24px; margin-left: 59px; color: #999; }
.plus svg { width: 17px; height: 17px; }
.hd { margin: 5px 22px 0 auto; }
.hscroll { flex: 0 1 710px; height: 26px; border-radius: 13px; background: #f6f6f6; padding: 0 7px; display: flex; align-items: center; gap: 8px; }
.hscroll svg { width: 11px; height: 14px; }
.hscroll i { flex: 0 1 487px; height: 12px; border-radius: 6px; background: #707070; }
.hscroll .right { margin-left: auto; }

/* dialog window */
.dialog { position: absolute; left: 856px; top: 566px; width: 625px; height: 383px; display: flex; flex-direction: column; background: #f0f0f0; border-radius: 10px; color: #000; box-shadow: 0 0 0 1px #a8a8a8, 0 16px 50px rgba(0,0,0,.45); }
.dlg-head { height: 44px; display: flex; align-items: center; background: #f1f3f9; border-radius: 10px 10px 0 0; padding-left: 12px; }
.dlg-head h1 { margin: 0 auto 0 0; font-size: 18px; font-weight: 400; }
.dlg-head button { width: 71px; height: 44px; }
.dlg-head button:disabled { color: #c0c0c0; }
.dlg-head svg { width: 16px; height: 16px; }
.dlg-body { flex: 1; display: flex; flex-direction: column; align-items: flex-start; padding: 12px 11px 13px 10px; }
.legend { display: flex; align-items: center; width: 100%; height: 24px; gap: 6px; margin-bottom: 16px; }
.legend::after { content: ""; flex: 1; height: 1px; background: #dadada; }
.opt { display: flex; align-items: center; gap: 6px; height: 22px; padding-left: 15px; margin-bottom: 10px; }
.opt input { appearance: none; width: 20px; height: 20px; border-radius: 50%; border: 1px solid #b8b8b8; background: #f8f8f8; }
.opt input:checked { border: 6px solid #005fb8; background: #fff; }
.off { color: #6d6d6d; }
.field { display: flex; align-items: center; width: 100%; height: 36px; margin-bottom: 10px; padding-left: 71px; }
.range { position: relative; flex: 1; margin-left: 15px; height: 36px; display: flex; background: #fff; border: 1px solid #a5a5ad; padding-left: 5px; }
.range input { flex: 1; padding-bottom: 6px; font-size: 19px; }
.range button { width: 32px; border: 1px solid #d0d0d0; border-radius: 4px; background: #fdfdfd; }
.range svg { width: 16px; height: 20px; }
.caret { position: absolute; left: 216px; top: 3px; width: 1px; height: 24px; background: #000; }
.btn { width: 124px; height: 41px; border: 1px solid #d0d0d0; border-radius: 4px; background: #fdfdfd; }
.conn { width: 136px; color: #6d6d6d; margin: 0 0 6px 71px; }
.conn-name { margin-left: 71px; color: #6d6d6d; }
.ok { border-color: #0067c0; }
.actions { display: flex; gap: 16px; margin: auto 0 0 auto; }
.grip { position: absolute; right: 0; bottom: 0; width: 14px; height: 14px; color: #999; }
.mark { position: absolute; left: 1029px; top: 678px; width: 296px; height: 59px; border: 7px solid #ff2012; border-radius: 5px; }
.ime { position: absolute; left: 844px; top: 784px; width: 231px; height: 231px; border-radius: 10px; background: rgba(0,0,0,.2); box-shadow: 0 0 3px rgba(0,0,0,.15); }
.ime svg { width: 231px; height: 231px; filter: drop-shadow(0 2px 2px rgba(0,0,0,.2)); }
.ime span { position: absolute; left: 81px; top: 88px; font: 45px/50px "Liberation Sans", sans-serif; color: #fff; text-shadow: 0 2px 2px rgba(0,0,0,.2); }
.watermark { position: absolute; right: 14px; bottom: 6px; font: 15px/24px "Noto Sans CJK SC", sans-serif; color: #888; text-shadow: 1px 1px 0 #fff; }
```
